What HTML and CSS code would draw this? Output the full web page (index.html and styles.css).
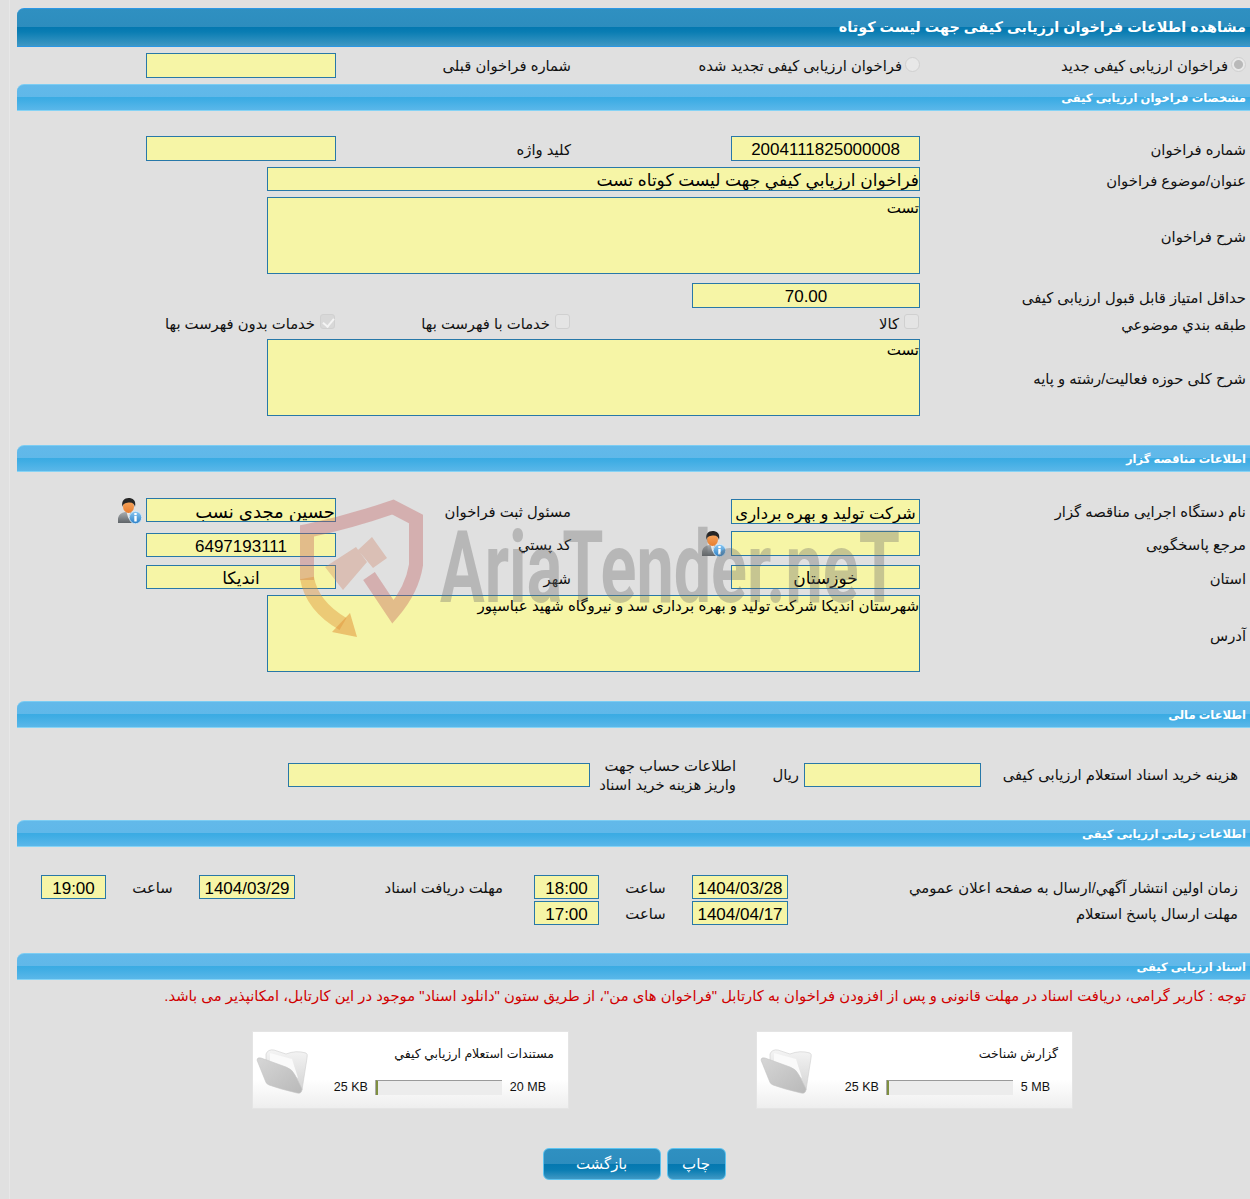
FILE: index.html
```html
<!DOCTYPE html>
<html lang="fa" dir="rtl">
<head>
<meta charset="utf-8">
<title>مشاهده اطلاعات فراخوان ارزیابی کیفی جهت لیست کوتاه</title>
<link rel="stylesheet" href="styles.css">
</head>
<body>
<svg class="defs" width="0" height="0" aria-hidden="true">
  <defs>
    <linearGradient id="suit" x1="0" y1="0" x2="0" y2="1"><stop offset="0" stop-color="#a9adb0"/><stop offset="1" stop-color="#5f6468"/></linearGradient>
    <linearGradient id="face" x1="0" y1="0" x2="0" y2="1"><stop offset="0" stop-color="#f7a860"/><stop offset="1" stop-color="#e87e30"/></linearGradient>
    <linearGradient id="info" x1="0" y1="0" x2="0" y2="1"><stop offset="0" stop-color="#8cc8f2"/><stop offset="1" stop-color="#2a7fc6"/></linearGradient>
    <linearGradient id="fback" x1="0" y1="0" x2="0" y2="1"><stop offset="0" stop-color="#f4f4f4"/><stop offset="1" stop-color="#d4d4d4"/></linearGradient>
    <linearGradient id="ffront" x1="0" y1="0" x2="1" y2="1"><stop offset="0" stop-color="#d6d6d6"/><stop offset="1" stop-color="#b9b9b9"/></linearGradient>
    <symbol id="person" viewBox="0 0 24 26">
      <path d="M0 25c-1-7 2-10 7-11h6l3 1v10z" fill="url(#suit)"/>
      <path d="M8.500 14h4l-2 7z" fill="#e8e8e8"/>
      <ellipse cx="10.500" cy="8.500" rx="5.500" ry="6.500" fill="url(#face)"/>
      <path d="M4.500 9C3 3 6.500 0 10.500 0s8 2 6.500 9c-.5-3-2.500-5-6.500-4.500-3.500.5-5.500 1-6 4.500z" fill="#262626"/>
      <circle cx="17.500" cy="19.500" r="6.200" fill="url(#info)" stroke="#d8ecfa" stroke-width=".8"/>
      <rect x="16.300" y="18" width="2.400" height="5.500" fill="#fff"/>
      <rect x="16.300" y="15" width="2.400" height="2.200" fill="#fff"/>
    </symbol>
    <symbol id="folder" viewBox="0 0 52 46">
      <path d="M10 6 Q12 1 18 2 L30 6 Q40 2 50 5 Q52 6 51 10 L46 42 Q40 30 30 24 L10 14z" fill="url(#fback)" stroke="#cfcfcf" stroke-width=".6"/>
      <path d="M14 5 L36 11 L42 30 L14 14z" fill="#fafafa"/>
      <path d="M1 12 Q1 9 5 10 L30 19 Q36 21 39 27 L46 41 Q46 46 41 45 Q24 41 13 37 Q10 36 9 32z" fill="url(#ffront)" stroke="#c4c4c4" stroke-width=".6"/>
    </symbol>
  </defs>
</svg>
<main class="page">
  <h1 class="title-bar">مشاهده اطلاعات فراخوان ارزیابی کیفی جهت لیست کوتاه</h1>

  <div class="form-grid type-row">
    <label class="choice first"><input type="radio" class="radio on" disabled checked>فراخوان ارزیابی کیفی جدید</label>
    <label class="choice"><input type="radio" class="radio" disabled>فراخوان ارزیابی کیفی تجدید شده</label>
    <span class="lbl">شماره فراخوان قبلی</span>
    <input class="fld" readonly>
  </div>

  <h2 class="bar">مشخصات فراخوان ارزیابی کیفی</h2>
  <div class="form-grid spec">
    <span class="lbl first">شماره فراخوان</span>
    <input class="fld f2 num" readonly value="2004111825000008">
    <span class="lbl">کلید واژه</span>
    <input class="fld" readonly>

    <span class="lbl first">عنوان/موضوع فراخوان</span>
    <input class="fld wide" readonly value="فراخوان ارزيابي كيفي جهت ليست كوتاه تست">

    <span class="lbl first">شرح فراخوان</span>
    <textarea class="area wide" readonly>تست</textarea>

    <span class="lbl first score-lbl">حداقل امتیاز قابل قبول ارزیابی کیفی</span>
    <input class="fld score num" readonly value="70.00">

    <span class="lbl first">طبقه بندي موضوعي</span>
    <label class="choice"><input type="checkbox" class="check" disabled>کالا</label>
    <label class="choice"><input type="checkbox" class="check" disabled>خدمات با فهرست بها</label>
    <label class="choice"><input type="checkbox" class="check" disabled checked>خدمات بدون فهرست بها</label>

    <span class="lbl first">شرح کلی حوزه فعالیت/رشته و پایه</span>
    <textarea class="area wide" readonly>تست</textarea>
  </div>

  <h2 class="bar">اطلاعات مناقصه گزار</h2>
  <div class="form-grid tender">
    <span class="lbl first">نام دستگاه اجرایی مناقصه گزار</span>
    <input class="fld f2 num drop1" readonly value="شرکت تولید و بهره برداری">
    <span class="lbl">مسئول ثبت فراخوان</span>
    <input class="fld thin name" readonly value="حسین مجدی نسب">
    <svg class="person"><use href="#person"/></svg>

    <span class="lbl first">مرجع پاسخگویی</span>
    <div class="with-icon"><input class="fld f2" readonly><svg class="person"><use href="#person"/></svg></div>
    <span class="lbl">کد پستي</span>
    <input class="fld thin num drop2" readonly value="6497193111">

    <span class="lbl first">استان</span>
    <input class="fld f2 thin num" readonly value="خوزستان">
    <span class="lbl">شهر</span>
    <input class="fld thin num" readonly value="اندیکا">

    <span class="lbl first addr">آدرس</span>
    <textarea class="area wide" readonly>شهرستان اندیکا شرکت تولید و بهره برداری سد و نیروگاه شهید عباسپور</textarea>
  </div>

  <h2 class="bar">اطلاعات مالی</h2>
  <div class="money">
    <span class="lbl indent">هزینه خرید اسناد استعلام ارزیابی کیفی</span>
    <input class="fld thin" readonly>
    <span class="lbl rial">ریال</span>
    <span class="lbl two">اطلاعات حساب جهت<br>واریز هزینه خرید اسناد</span>
    <input class="fld thin" readonly>
  </div>

  <h2 class="bar">اطلاعات زمانی ارزیابی کیفی</h2>
  <div class="times">
    <span class="lbl indent">زمان اولین انتشار آگهي/ارسال به صفحه اعلان عمومي</span>
    <input class="fld thin num" readonly value="1404/03/28">
    <span class="lbl mid">ساعت</span>
    <input class="fld thin num" readonly value="18:00">
    <span class="lbl receive">مهلت دریافت اسناد</span>
    <input class="fld thin num" readonly value="1404/03/29">
    <span class="lbl mid">ساعت</span>
    <input class="fld thin num" readonly value="19:00">

    <span class="lbl indent">مهلت ارسال پاسخ استعلام</span>
    <input class="fld thin num" readonly value="1404/04/17">
    <span class="lbl mid">ساعت</span>
    <input class="fld thin num" readonly value="17:00">
  </div>

  <h2 class="bar">اسناد ارزیابی کیفی</h2>
  <p class="notice">توجه : کاربر گرامی، دریافت اسناد در مهلت قانونی و پس از افزودن فراخوان به کارتابل "فراخوان های من"، از طریق ستون "دانلود اسناد" موجود در این کارتابل، امکانپذیر می باشد.</p>

  <div class="cards">
    <article class="card">
      <div class="card-body">
        <div class="card-title">گزارش شناخت</div>
        <div class="card-size"><span class="size">5 MB</span><span class="meter"></span><span class="size">25 KB</span></div>
      </div>
      <svg class="folder"><use href="#folder"/></svg>
    </article>
    <article class="card">
      <div class="card-body">
        <div class="card-title">مستندات استعلام ارزيابي كيفي</div>
        <div class="card-size"><span class="size">20 MB</span><span class="meter"></span><span class="size">25 KB</span></div>
      </div>
      <svg class="folder"><use href="#folder"/></svg>
    </article>
  </div>

  <div class="actions">
    <button class="btn print" type="button">چاپ</button>
    <button class="btn back" type="button">بازگشت</button>
  </div>

  <svg class="watermark" viewBox="290 495 620 150" aria-hidden="true">
    <path class="wm-shield" d="M307 580 V531 Q350 522 393 507 L416 519 V565 Q412 590 393 612 L369 576"/>
    <path class="wm-arrow" d="M307 578 Q312 606 343 624"/>
    <path class="wm-head" d="M350 613 L332 632 L357 637 Z"/>
    <path class="wm-gavel" d="M325 567 L356 547 L367 562 L343 590 Z M358 550 L372 537 L387 558 L373 568 Z"/>
    <text class="wm-text" x="440" y="602" textLength="460" lengthAdjust="spacingAndGlyphs" direction="ltr">AriaTender.neT</text>
  </svg>
</main>
</body>
</html>
```
FILE: styles.css
```css
* { box-sizing: border-box; }
html, body { margin: 0; padding: 0; }
body {
  background: #e0e0e0;
  color: #111;
  font: 14.800px/20px "Liberation Sans", "DejaVu Sans", sans-serif;
  height: 1199px;
  overflow: hidden;
}
.defs { position: absolute; }
.page {
  position: relative;
  height: 1199px;
  margin-left: 9px;
  padding: 8px 0 0 7px;
  border-left: 1px solid #e7e7e7;
}
h1, h2, p { margin: 0; }

.title-bar {
  height: 39px;
  padding-right: 4px;
  border-top: 1px solid #2a97e5;
  border-bottom: 1px solid #2a97e5;
  border-top-left-radius: 7px;
  background: linear-gradient(#2f90c1 0, #2d8dbe 49%, #0478b0 50%, #0a7db3 62%, #3f98c4 100%);
  color: #fff;
  font-size: 14.400px;
  font-weight: 700;
  line-height: 37px;
}
.bar {
  height: 27px;
  margin-top: 29px;
  padding-right: 4px;
  border-top: 1px solid #7ccdf3;
  border-bottom: 1px solid #86d3f5;
  border-top-left-radius: 7px;
  background: linear-gradient(#62b9ea 0, #60b8e9 47%, #3aabe3 48%, #3fade4 60%, #5ab7e9 100%);
  color: #fff;
  font-size: 11.500px;
  font-weight: 700;
  line-height: 27px;
}

.form-grid {
  display: grid;
  grid-template-columns: 330px 349px 235px 190px 129px;
}
.type-row { margin-top: 6px; height: 25px; }
.type-row + .bar { margin-top: 6px; }
.spec {
  margin-top: 25px;
  grid-template-rows: 25px 24px 77px 28px 19px 77px;
  row-gap: 6px;
}
.tender {
  margin-top: 26px;
  grid-template-rows: 33px 34px 30px 77px;
}

.lbl { padding-top: 3px; white-space: nowrap; align-self: center; }
.first { grid-column: 1; margin-right: 4px; }
.score-lbl { align-self: end; }
.type-row .lbl { padding-top: 1px; }
.tender .lbl { align-self: start; padding-top: 4px; }
.tender .lbl.addr { align-self: center; padding-top: 5px; }
.choice {
  display: flex;
  align-items: center;
  white-space: nowrap;
  margin-top: 1px;
}

.fld, .area {
  display: block;
  margin: 0;
  padding: 0;
  border: 1px solid #2878a8;
  border-radius: 0;
  outline: none;
  background: #f6f5a6;
  color: #000;
  font: 17px "Liberation Sans", "DejaVu Sans", sans-serif;
  text-align: right;
  direction: rtl;
}
.fld { width: 190px; height: 25px; padding-top: 3px; }
.f2 { width: 189px; }
.thin { height: 24px; }
.num { text-align: center; }
.wide { grid-column: 2 / span 3; width: 653px; }
.fld.wide { height: 24px; }
.area {
  width: 653px;
  height: 77px;
  resize: none;
  overflow: hidden;
  font-size: 15px;
  line-height: 20px;
}
.score { width: 228px; margin-top: 3px; }
.name { font-size: 18px; }
.drop1 { margin-top: 1px; font-size: 16.400px; }
.drop2 { margin-top: 2px; }
.with-icon { display: flex; align-items: flex-start; gap: 5px; }
.person { display: block; width: 24px; height: 26px; margin-right: 4px; }
.with-icon .person { margin-right: 0; }

.radio, .check {
  appearance: none;
  flex: none;
  margin: 0 0 3px 3px;
  background: #e8e8e8;
  border: 1px solid #d0d0d0;
}
.radio { width: 15px; height: 15px; border-radius: 50%; }
.radio.on { background: radial-gradient(circle, #b9b9b9 0 4px, #e8e8e8 5px); }
.check {
  position: relative;
  width: 15px;
  height: 15px;
  margin: 0 1px 6px 5px;
  border-radius: 3px;
  background: #e4e4e4;
}
.check:checked { background: #d8d8d8; }
.check:checked::after {
  content: "";
  position: absolute;
  left: 4px;
  top: 1px;
  width: 5px;
  height: 9px;
  border: solid #f4f4f4;
  border-width: 0 2px 2px 0;
  transform: rotate(40deg);
}

.money {
  display: grid;
  grid-template-columns: 269px 177px 68px 146px 302px;
  align-items: center;
  margin-top: 27px;
  height: 38px;
}
.money .fld { width: 100%; }
.money .lbl { padding-top: 0; }
.money .lbl.two { padding-top: 2px; line-height: 19px; }
.indent { margin-right: 12px; }
.rial { margin-right: 5px; }
.money + .bar { margin-top: 27px; }

.times {
  display: grid;
  grid-template-columns: 462px 96px 93px 65px 239px 96px 93px 65px;
  grid-auto-rows: 24px;
  row-gap: 2px;
  align-items: center;
  margin-top: 28px;
}
.times .fld { width: 100%; }
.times .lbl { padding-top: 1px; }
.mid { text-align: center; }
.receive { margin-right: 31px; }
.times + .bar { margin-top: 28px; }

.notice {
  margin: 6px 4px 0 0;
  color: #d00000;
  font-size: 14.800px;
  white-space: nowrap;
}
.cards {
  display: flex;
  gap: 187px;
  margin-top: 25px;
  padding-right: 177px;
}
.card {
  display: flex;
  justify-content: space-between;
  width: 317px;
  height: 78px;
  border: 1px solid #e4e4e4;
  background: linear-gradient(#fff 0, #fff 62%, #eeeeee 100%);
}
.card-body { flex: 1; padding: 12px 14px 0 0; }
.card-title { font-size: 12.500px; line-height: 20px; }
.card-size {
  display: flex;
  align-items: center;
  gap: 8px;
  margin: 14px 8px 0 0;
  font-size: 12.500px;
  line-height: 18px;
}
.size { direction: ltr; unicode-bidi: isolate; }
.meter {
  width: 126px;
  height: 15px;
  border-top: 1px solid #9a9a9a;
  border-left: 2px solid #7f8f40;
  background: #ececec;
  box-shadow: -1px 0 0 #aaa;
}
.folder { display: block; flex: none; width: 52px; height: 46px; margin: 16px 3px 0 3px; }

.actions {
  display: flex;
  justify-content: center;
  gap: 6px;
  margin: 39px 0 0 1px;
}
.btn {
  height: 32px;
  padding: 0 0 1px;
  border: 1px solid #5cc3f0;
  border-radius: 6px;
  background: linear-gradient(#2f90c1 0, #2d8dbe 49%, #0478b0 50%, #0a7db3 70%, #3f98c4 100%);
  color: #fff;
  font: 15px "DejaVu Sans", sans-serif;
}
.print { width: 59px; }
.back { width: 118px; }

.watermark {
  position: absolute;
  left: 280px;
  top: 495px;
  width: 620px;
  height: 150px;
  pointer-events: none;
}
.wm-shield { fill: none; stroke: rgba(190, 90, 90, .36); stroke-width: 14; }
.wm-arrow { fill: none; stroke: rgba(225, 150, 60, .45); stroke-width: 14; }
.wm-head { fill: rgba(225, 150, 60, .55); }
.wm-gavel { fill: rgba(205, 120, 90, .32); }
.wm-text {
  fill: rgba(105, 105, 105, .34);
  font: 700 100px Roboto, "Liberation Sans", sans-serif;
}
```
